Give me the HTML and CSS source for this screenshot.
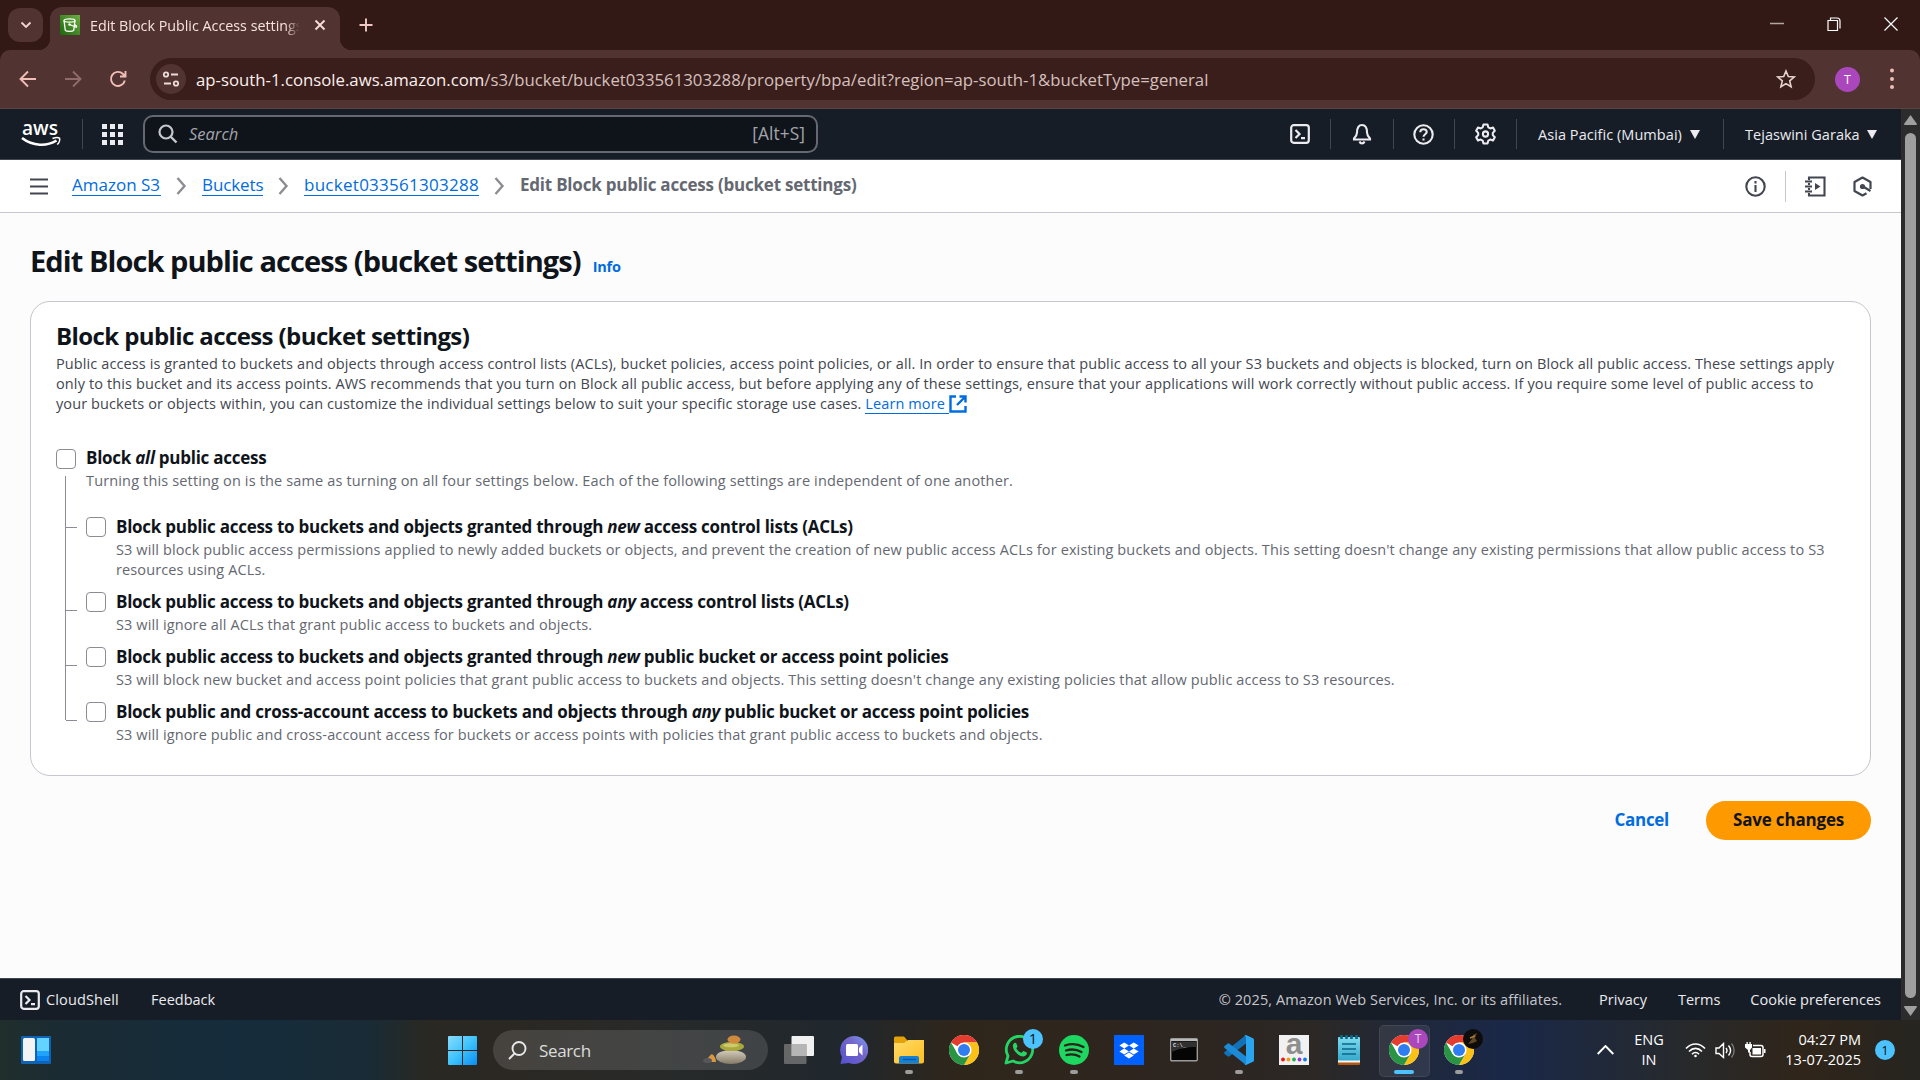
FILE: index.html
```
<!DOCTYPE html>
<html lang="en">
<head>
<meta charset="utf-8">
<title>Edit Block Public Access settings</title>
<link rel="stylesheet" href="styles.css">
</head>
<body>
<svg class="defs" width="0" height="0">
  <defs>
    <linearGradient id="bucketBg" x1="1" y1="0" x2="0" y2="1"><stop offset="0" stop-color="#6cae3e"/><stop offset="1" stop-color="#1b660f"/></linearGradient>
    <linearGradient id="win" x1="0" y1="0" x2="1" y2="1"><stop offset="0" stop-color="#8adcfd"/><stop offset=".5" stop-color="#3fc3fb"/><stop offset="1" stop-color="#0a8cf5"/></linearGradient>
    <linearGradient id="chatBg" x1="1" y1="0" x2="0" y2="1"><stop offset="0" stop-color="#7b9cf5"/><stop offset=".4" stop-color="#7467c8"/><stop offset="1" stop-color="#5450cf"/></linearGradient>
    <linearGradient id="folder" x1="0" y1="0" x2="1" y2="1"><stop offset="0" stop-color="#ffdc6a"/><stop offset="1" stop-color="#ffbd1e"/></linearGradient>
    <linearGradient id="stone" x1="0" y1="0" x2="0" y2="1"><stop offset="0" stop-color="#d6cdbc"/><stop offset="1" stop-color="#857a68"/></linearGradient>
    <linearGradient id="note" x1="0" y1="0" x2="0" y2="1"><stop offset="0" stop-color="#7fdcf0"/><stop offset="1" stop-color="#35a9cc"/></linearGradient>
    <symbol id="chrome" viewBox="0 0 30 30">
      <circle cx="15" cy="15" r="15" fill="#fff"/>
      <path d="M15 15L2 7.500A15 15 0 0 1 28 7.500H15z" fill="#e53c30"/>
      <path d="M15 7.500H28A15 15 0 0 1 15 30L21.500 18.800z" fill="#fbc116"/>
      <path d="M2 7.500A15 15 0 0 0 15 30L21.500 18.800 15 22 8.500 18.800z" fill="#2a9445"/>
      <circle cx="15" cy="15" r="7.600" fill="#fff"/><circle cx="15" cy="15" r="6" fill="#2f7df0"/>
    </symbol>
    <symbol id="shell" viewBox="0 0 20 20"><rect x="1.200" y="1.200" width="17.600" height="17.600" rx="2.500" fill="none" stroke="currentColor" stroke-width="2.200"/><path d="M5.500 6l4 4-4 4M11 14.200h4" fill="none" stroke="currentColor" stroke-width="2.200"/></symbol>
  </defs>
</svg>

<div class="tabstrip">
  <div class="tab-search"><svg width="12" height="8" viewBox="0 0 12 8"><path d="M1.500 1.500L6 6l4.500-4.500" class="ln" stroke="#f0d4d0"/></svg></div>
  <div class="tab">
    <svg width="20" height="20" viewBox="0 0 20 20"><rect width="20" height="20" fill="url(#bucketBg)"/><g fill="none" stroke="#fff" stroke-width="1.300"><ellipse cx="9.500" cy="5.500" rx="5.500" ry="1.600"/><path d="M4 5.500l1.300 9.800c1 1.300 7.400 1.300 8.400 0L15 5.500M9.500 9.500l6 2.500c2 .5 1-1.500-.8-2.500"/></g><circle cx="9.500" cy="9.500" r="1.200" fill="#fff"/></svg>
    <span class="tab-title">Edit Block Public Access settings</span>
    <svg width="12" height="12" viewBox="0 0 12 12"><path d="M1.500 1.500l9 9M10.500 1.500l-9 9" class="ln" stroke="#f6dedb"/></svg>
  </div>
  <svg class="newtab" width="14" height="14" viewBox="0 0 14 14"><path d="M7 .5v13M.5 7h13" class="ln" stroke="#f0c9c4"/></svg>
  <div class="win-controls">
    <svg width="14" height="14" viewBox="0 0 14 14"><path d="M0 6.500h14" stroke="#b4a5a2" stroke-width="1.500"/></svg>
    <svg width="14" height="14" viewBox="0 0 14 14"><path d="M1 3.500h9.500v10H1zM3.500 3V1H10q3 0 3 3v7.500" fill="none" stroke="#fff" stroke-width="1.200"/></svg>
    <svg width="14" height="14" viewBox="0 0 14 14"><path d="M.5.5l13 13M13.500.5l-13 13" stroke="#fff" stroke-width="1.200"/></svg>
  </div>
</div>

<div class="toolbar">
  <div class="nav">
    <svg width="18" height="18" viewBox="0 0 18 18"><path d="M17 9H2M9 1.500L1.500 9 9 16.500" class="ln" stroke="#f0bdb7"/></svg>
    <svg width="18" height="18" viewBox="0 0 18 18"><path d="M1 9h15M9 1.500L16.500 9 9 16.500" class="ln" stroke="#8f6c69"/></svg>
    <svg width="18" height="18" viewBox="0 0 18 18"><path d="M15.800 10.500A7 7 0 1 1 14 4l1.800 2M16.500 1v5.500H11" class="ln" stroke="#f0bdb7"/></svg>
  </div>
  <div class="omnibox">
    <div class="site-info"><svg width="18" height="18" viewBox="0 0 18 18"><g fill="none" stroke="#ecdcd9" stroke-width="1.800"><circle cx="4" cy="4.500" r="2.200"/><path d="M9 4.500h7M2 13.500h7"/><circle cx="14" cy="13.500" r="2.200"/></g></svg></div>
    <span class="url"><span class="host">ap-south-1.console.aws.amazon.com</span>/s3/bucket/bucket033561303288/property/bpa/edit?region=ap-south-1&amp;bucketType=general</span>
    <svg class="star" width="20" height="20" viewBox="0 0 20 20"><path d="M10 2l2.300 5.500 5.900.5-4.500 3.900 1.400 5.800L10 14.600l-5.100 3.100 1.400-5.800L1.800 8l5.900-.5z" fill="none" stroke="#e6d3d0" stroke-width="1.600"/></svg>
  </div>
  <div class="avatar">T</div>
  <svg class="dots" width="4" height="22" viewBox="0 0 4 22" fill="#f0bdb7"><circle cx="2" cy="2.500" r="2"/><circle cx="2" cy="11" r="2"/><circle cx="2" cy="19" r="2"/></svg>
</div>

<div class="viewport">
  <div class="page">
    <header class="aws-header">
      <svg class="logo" width="40" height="30" viewBox="0 0 40 30"><text x="1" y="15.500" class="logo-text" textLength="36" lengthAdjust="spacingAndGlyphs">aws</text><path d="M1 19c11 8.500 25 8.500 34.500 2.500" fill="none" stroke="#fff" stroke-width="2.600"/><path d="M31.500 19.500c3-1 6-1 7-.3.600 1.800-.5 4.800-2.300 6.300" fill="none" stroke="#fff" stroke-width="1.600"/></svg>
      <i class="sep"></i>
      <svg class="apps" width="21" height="21" viewBox="0 0 21 21" fill="#ebebf0"><path d="M0 0h5v5H0zM8 0h5v5H8zM16 0h5v5h-5zM0 8h5v5H0zM8 8h5v5H8zM16 8h5v5h-5zM0 16h5v5H0zM8 16h5v5H8zM16 16h5v5h-5z"/></svg>
      <div class="search">
        <svg width="20" height="20" viewBox="0 0 20 20"><circle cx="8" cy="8" r="6.500" fill="none" stroke="#c6c6cd" stroke-width="2.200"/><path d="M12.500 12.500l6 6" stroke="#c6c6cd" stroke-width="2.400"/></svg>
        <span class="ph">Search</span><span class="hint">[Alt+S]</span>
      </div>
      <div class="tools">
        <div class="tool t1"><svg width="20" height="20"><use href="#shell"/></svg></div>
        <div class="tool t2"><svg width="20" height="22" viewBox="0 0 20 22" fill="none" stroke="currentColor" stroke-width="2.100"><path d="M2 15.500c2-2 3-3 3-6C5 4.500 7 2 10 2s5 2.500 5 7.500c0 3 1 4 3 6v1H2zM7.500 18.500c1 2.500 4 2.500 5 0"/></svg></div>
        <div class="tool t3"><svg width="21" height="21" viewBox="0 0 21 21" fill="none" stroke="currentColor" stroke-width="2.100"><circle cx="10.500" cy="10.500" r="9.200"/><path d="M7.300 8.300c0-4 6.400-4 6.400-.3 0 2.200-3.200 2.300-3.200 4.800M10.500 14.500v2"/></svg></div>
        <div class="tool t4"><svg width="21" height="22" viewBox="0 0 21 22" fill="none" stroke="currentColor" stroke-width="2.100"><path d="M8.500 1.500h4l.8 2.800 2 1.100 2.700-.9 1.800 3.300-2 2.100v2.200l2 2.100-1.800 3.300-2.700-.9-2 1.100-.8 2.800h-4l-.8-2.800-2-1.100-2.700.9-1.800-3.300 2-2.100V9.900l-2-2.100L3 4.500l2.700.9 2-1.100z" stroke-linejoin="round"/><circle cx="10.500" cy="11" r="2.600"/></svg></div>
        <div class="tool menu t5"><span>Asia Pacific (Mumbai)</span><i class="caret"></i></div>
        <div class="tool menu t6"><span>Tejaswini Garaka</span><i class="caret"></i></div>
      </div>
    </header>

    <nav class="crumbs">
      <svg class="burger" width="18" height="17" viewBox="0 0 18 17"><path d="M0 1.500h18M0 8.500h18M0 15.500h18" stroke="#424650" stroke-width="2.200"/></svg>
      <a class="c1">Amazon S3</a><svg class="chev" width="11" height="18" viewBox="0 0 11 18"><path d="M1.500 1l7 8-7 8"/></svg>
      <a class="c2">Buckets</a><svg class="chev" width="11" height="18" viewBox="0 0 11 18"><path d="M1.500 1l7 8-7 8"/></svg>
      <a class="c3">bucket033561303288</a><svg class="chev" width="11" height="18" viewBox="0 0 11 18"><path d="M1.500 1l7 8-7 8"/></svg>
      <b>Edit Block public access (bucket settings)</b>
      <div class="crumb-tools">
        <svg width="21" height="21" viewBox="0 0 21 21" fill="none" stroke="#424650" stroke-width="2.100"><circle cx="10.500" cy="10.500" r="9.200"/><path d="M10.500 9v7M10.500 5v2.500"/></svg>
        <i></i>
        <svg width="21" height="21" viewBox="0 0 21 21" fill="none" stroke="#424650" stroke-width="2.100"><path d="M4 4V1.500h15.500v18H4V17M4 7v2M4 12v2M0 5.500h7M0 10.500h7M0 15.500h7"/><path d="M10 7v7l5.500-3.500z" fill="#424650" stroke="none"/></svg>
        <svg width="19" height="21" viewBox="0 0 19 21" fill="none" stroke="#424650" stroke-width="2.200"><path d="M17.500 13V6l-8-4.500-8 4.500v9l8 4.500 4-2.300M10 10.500l7.500 4.500" stroke-linejoin="round"/><circle cx="9.500" cy="10.500" r="2.600" fill="#424650" stroke="none"/></svg>
      </div>
    </nav>

    <main class="content">
      <div class="title-row"><h1>Edit Block public access (bucket settings)</h1><a>Info</a></div>
      <section class="card">
        <h2>Block public access (bucket settings)</h2>
        <p class="intro">Public access is granted to buckets and objects through access control lists (ACLs), bucket policies, access point policies, or all. In order to ensure that public access to all your S3 buckets and objects is blocked, turn on Block all public access. These settings apply<br><span class="mid">only to this bucket and its access points. AWS recommends that you turn on Block all public access, but before applying any of these settings, ensure that your applications will work correctly without public access. If you require some level of public access to</span><br>your buckets or objects within, you can customize the individual settings below to suit your specific storage use cases. <a class="learn">Learn more&nbsp;</a><svg class="ext" width="18" height="18" viewBox="0 0 18 18" fill="none" stroke="#006ce0" stroke-width="2.400"><path d="M7 1.500H1.500v15h15V11M10.500 1.500h6v6M16 2L8 10"/></svg></p>
        <div class="tree">
          <div class="opt root"><i class="box"></i><div><div class="lbl">Block <em>all</em> public access</div><div class="desc root-desc">Turning this setting on is the same as turning on all four settings below. Each of the following settings are independent of one another.</div></div></div>
          <div class="kids">
            <div class="opt first"><i class="box"></i><div><div class="lbl">Block public access to buckets and objects granted through <em>new</em> access control lists (ACLs)</div><div class="desc">S3 will block public access permissions applied to newly added buckets or objects, and prevent the creation of new public access ACLs for existing buckets and objects. This setting doesn't change any existing permissions that allow public access to S3<br>resources using ACLs.</div></div></div>
            <div class="opt"><i class="box"></i><div><div class="lbl">Block public access to buckets and objects granted through <em>any</em> access control lists (ACLs)</div><div class="desc">S3 will ignore all ACLs that grant public access to buckets and objects.</div></div></div>
            <div class="opt"><i class="box"></i><div><div class="lbl">Block public access to buckets and objects granted through <em>new</em> public bucket or access point policies</div><div class="desc">S3 will block new bucket and access point policies that grant public access to buckets and objects. This setting doesn't change any existing policies that allow public access to S3 resources.</div></div></div>
            <div class="opt"><i class="box"></i><div><div class="lbl">Block public and cross-account access to buckets and objects through <em>any</em> public bucket or access point policies</div><div class="desc">S3 will ignore public and cross-account access for buckets or access points with policies that grant public access to buckets and objects.</div></div></div>
          </div>
        </div>
      </section>
      <div class="actions"><a>Cancel</a><button>Save changes</button></div>
    </main>

    <footer class="aws-footer">
      <svg width="20" height="20"><use href="#shell"/></svg><span class="f1">CloudShell</span><span>Feedback</span>
      <div class="legal"><span class="copy">© 2025, Amazon Web Services, Inc. or its affiliates.</span><span class="f2">Privacy</span><span class="f3">Terms</span><span>Cookie preferences</span></div>
    </footer>
  </div>
  <div class="scrollbar">
    <svg width="13" height="10" viewBox="0 0 13 10"><path d="M6.500 0L13 9q0 1-1 1H1Q0 10 0 9z" fill="#a0a0a0"/></svg>
    <div class="thumb"></div>
    <svg width="13" height="10" viewBox="0 0 13 10"><path d="M6.500 10L13 1q0-1-1-1H1Q0 0 0 1z" fill="#a0a0a0"/></svg>
  </div>
</div>

<div class="taskbar">
  <svg class="widgets" width="30" height="28" viewBox="0 0 30 28"><rect width="30" height="28" rx="1" fill="#0f62b4"/><rect x="2" y="2" width="12" height="23" rx="1.500" fill="#f4f4f6"/><rect x="16" y="2" width="12" height="13" fill="#63d3ff"/><rect x="16" y="15" width="12" height="5" fill="#21a2fb"/><rect x="16" y="20" width="12" height="5" fill="#0c84ef"/></svg>
  <div class="cell start"><svg width="29" height="29" viewBox="0 0 29 29" fill="url(#win)"><path d="M0 1q0-1 1-1h13v14H0zM15 0h13q1 0 1 1v13H15zM0 15h14v14H1q-1 0-1-1zM15 15h14v13q0 1-1 1H15z"/></svg></div>
  <div class="tb-search">
    <svg width="19" height="19" viewBox="0 0 19 19" fill="none" stroke="#e8e8e8" stroke-width="1.900"><circle cx="11" cy="7.500" r="6.500"/><path d="M6.500 12.500L1 18"/></svg>
    <span>Search</span>
    <svg class="stones" width="50" height="30" viewBox="0 0 50 30"><path d="M3 27c2-3 5-7 7-8 3 2 4 5 4 8z" fill="#d9983f"/><ellipse cx="5.500" cy="25.500" rx="4.500" ry="2.500" fill="#55575c"/><ellipse cx="29" cy="22" rx="15" ry="7" fill="url(#stone)"/><ellipse cx="30" cy="11.500" rx="12" ry="4.500" fill="#a8a83c"/><ellipse cx="29" cy="10.300" rx="8" ry="2" fill="#cdc96e"/><ellipse cx="32" cy="4.500" rx="6.500" ry="4" fill="#d08a3e"/></svg>
  </div>
  <div class="cell"><svg width="30" height="28" viewBox="0 0 30 28"><rect x="7.500" y="0" width="22.500" height="20" rx="1" fill="#f0f0f0"/><rect x="0" y="8" width="22.500" height="20" rx="1" fill="#777" opacity=".8"/><rect x="7.500" y="8" width="15" height="12" fill="#b5b5b5"/></svg></div>
  <div class="cell"><svg width="28" height="28" viewBox="0 0 28 28"><path d="M14 0a14 14 0 1 1-5 27l-8.500 1L2 21A14 14 0 0 1 14 0z" fill="url(#chatBg)"/><rect x="6" y="8" width="12" height="12" rx="1.500" fill="#fff"/><path d="M19 12l3.500-3.500v11L19 16z" fill="#fff"/></svg></div>
  <div class="cell run"><svg width="30" height="28" viewBox="0 0 30 28"><path d="M0 2q0-1.500 1.500-1.500H10L13 4v8H0z" fill="#e2a208"/><path d="M0 7h10l4-3h16v21.500q0 2-2 2H2q-2 0-2-2z" fill="url(#folder)"/><path d="M5 27.500V22q0-2 2-2h16q2 0 2 2v5.500z" fill="#1580d4"/><path d="M9 23.500h13" stroke="#0c579f" stroke-width="1.200"/></svg></div>
  <div class="cell"><svg width="30" height="30"><use href="#chrome"/></svg></div>
  <div class="cell run"><svg width="30" height="30" viewBox="0 0 30 30"><path d="M2 28l2-7A13.200 13.200 0 1 1 9 26z" fill="none" stroke="#25d366" stroke-width="2.800" stroke-linejoin="round"/><path d="M9 10c1-3 3-2.500 3.500-1.200l1 2.700c0 1-1.500 1.500-1 2.300 1.200 2 2.700 3.300 4.700 4 1 0 1.500-2 2.500-1.800l3 1.500c1 1-.7 3.800-3.200 4C14 21.500 8 14.500 9 10z" fill="#25d366"/></svg><b class="count">1</b></div>
  <div class="cell run"><svg width="30" height="30" viewBox="0 0 30 30"><circle cx="15" cy="15" r="15" fill="#1ed760"/><path d="M6 10.500c6-2 13-1.500 18.500 1.500M7 15.500c5-1.600 11-1 15.500 1.500M7.500 20c4.500-1.200 9-.8 13 1.500" fill="none" stroke="#2a241b" stroke-width="2.300" stroke-linecap="round"/></svg></div>
  <div class="cell"><svg width="30" height="30" viewBox="0 0 30 30"><rect width="30" height="30" fill="#0061fe"/><path d="M10.200 7.500l4.800 3-4.800 3-4.800-3zM19.800 7.500l4.800 3-4.800 3-4.800-3zM10.200 13.500l4.800 3-4.800 3-4.800-3zM19.800 13.500l4.800 3-4.800 3-4.800-3zM15 17.500l4.800 3-4.800 3-4.800-3z" fill="#fff"/></svg></div>
  <div class="cell"><svg width="28" height="24" viewBox="0 0 28 24"><rect x=".7" y=".7" width="26.600" height="22" rx="1" fill="#050505" stroke="#9b9b9b" stroke-width="1.400"/><rect x="1" y="1" width="26" height="2" fill="#b9b9b9"/><path d="M1.500 3.500h25V9C16 9 8 11 1.500 14z" fill="#303030"/><text x="3" y="9" class="cmd">C:\_</text></svg></div>
  <div class="cell run"><svg width="30" height="30" viewBox="0 0 30 30"><path d="M22 0v8.500L5.500 21.300q-1 .7-2 0L.6 19q-1-1 0-2z" fill="#1272b8"/><path d="M22 30v-8.500L5.500 8.700q-1-.7-2 0L.6 11q-1 1 0 2z" fill="#1d8ad6"/><path d="M22 0l7 3.300q1 .5 1 1.500v20.400q0 1-1 1.500L22 30q-1 0-1.500-1 1.500 0 1.500-1.500v-25Q22 1 20.500 1q.5-1 1.500-1z" fill="#2aa5f0"/></svg></div>
  <div class="cell"><svg width="30" height="30" viewBox="0 0 30 30"><rect width="30" height="30" fill="#f1f1f1"/><text x="15" y="19" class="ama">a</text><circle cx="4" cy="24.500" r="1.900" fill="#f01414"/><circle cx="9.500" cy="24.500" r="1.900" fill="#f59b14"/><circle cx="15" cy="24.500" r="1.900" fill="#1fae54"/><circle cx="20.500" cy="24.500" r="1.900" fill="#9038d8"/><circle cx="26" cy="24.500" r="1.900" fill="#0c7fe0"/></svg></div>
  <div class="cell"><svg width="22" height="30" viewBox="0 0 22 30"><rect y="25" width="22" height="5" rx="1" fill="#b4560e"/><rect y="24" width="22" height="3.500" fill="#f4f4f4"/><rect y="2" width="22" height="23.500" rx="1" fill="url(#note)"/><path d="M4 9h14M4 14h14M4 19h14" stroke="#0b6688" stroke-width="1.700"/><path d="M3.500 0v4M8.500 0v4M13.500 0v4M18.500 0v4" stroke="#0b6688" stroke-width="2.600"/></svg></div>
  <div class="cell active"><svg width="30" height="30"><use href="#chrome"/></svg><b class="pic">T</b></div>
  <div class="cell run"><svg width="30" height="30"><use href="#chrome"/></svg><b class="pic dark"><svg width="20" height="20" viewBox="0 0 20 20"><path d="M5 15l4-5 1-4 4-2-2 5 2 3-4 2z" fill="#5d4526"/><path d="M7 9l5-2" stroke="#b07a35" stroke-width="1.500"/></svg></b></div>
  <div class="tray">
    <svg width="17" height="10" viewBox="0 0 17 10"><path d="M.7 9L8.500 1l7.800 8" class="ln" stroke="#fff"/></svg>
    <div class="lang">ENG<br>IN</div>
    <svg class="wifi" width="21" height="16" viewBox="0 0 21 16" fill="none" stroke="#fff" stroke-width="1.600"><path d="M1 6.500c5.500-6 13.500-6 19 0M4 9.500c4-4.200 9-4.200 13 0M7 12.200c2-2.200 5-2.200 7 0"/><circle cx="10.500" cy="14" r="1.300" fill="#fff" stroke="none"/></svg>
    <svg class="vol" width="21" height="17" viewBox="0 0 21 17" fill="none" stroke="#fff" stroke-width="1.400"><path d="M1 6h3l4.500-4.500v14L4 11.500H1zM11 6c1.200 1.500 1.200 3.500 0 5M13.500 3.500c2.500 3 2.500 7 0 10"/><path d="M16.500 1.500c3.500 4 3.500 10 0 14" stroke="#777"/></svg>
    <svg class="bat" width="21" height="17" viewBox="0 0 21 17"><path d="M8 3.500h8q2 0 2 2v7q0 2-2 2H7q-2 0-2-2V10" fill="none" stroke="#fff" stroke-width="1.500"/><path d="M7.500 6H16v6.500H7.500zM19 7h1.500v4H19zM0 2h1.500V0h1.300v2h1.600V0h1.300v2H7v3.500L5 8v2.500H3V8L0 5.500z" fill="#fff"/></svg>
    <div class="clock">04:27 PM<br>13-07-2025</div>
    <b class="notif">1</b>
  </div>
</div>
</body>
</html>
```
FILE: styles.css
```
* { box-sizing: border-box; }
body { margin: 0; width: 1920px; height: 1080px; overflow: hidden; display: flex; flex-direction: column; font-family: "Open Sans", "Noto Sans", sans-serif; font-size: 14.5px; background: #321916; color: #0f141a; }
svg { display: block; flex: none; }
.defs { position: absolute; }
.ln { fill: none; stroke-width: 1.9; }

/* browser chrome */
.tabstrip { height: 50px; flex: none; display: flex; background: #321916; padding-left: 8px; }
.tab-search { width: 35px; height: 34px; margin-top: 8px; border-radius: 12px; background: #513331; display: flex; align-items: center; justify-content: center; }
.tab { position: relative; width: 290px; height: 43px; margin: 7px 0 0 7px; padding: 0 14px 7px 10px; border-radius: 12px 12px 0 0; background: #513331; display: flex; align-items: center; }
.tab::before, .tab::after { content: ""; position: absolute; bottom: 0; width: 12px; height: 12px; }
.tab::before { left: -12px; background: radial-gradient(circle at 0 0, transparent 12px, #513331 12.5px); }
.tab::after { right: -12px; background: radial-gradient(circle at 100% 0, transparent 12px, #513331 12.5px); }
.tab-title { width: 210px; margin: 1px 14px 0 10px; overflow: hidden; white-space: nowrap; font-size: 14.3px; line-height: 22px; color: #f6e3e0; -webkit-mask-image: linear-gradient(90deg, #000 93%, transparent); mask-image: linear-gradient(90deg, #000 93%, transparent); }
.newtab { margin: 18px 0 0 19px; }
.win-controls { display: flex; gap: 43px; margin: 17px 22px 0 auto; }
.toolbar { height: 59px; flex: none; display: flex; align-items: center; background: #513331; border-bottom: 1px solid #5a4440; border-radius: 10px 10px 0 0; padding: 0 26px 0 19px; }
.nav { display: flex; gap: 27px; width: 131px; }
.omnibox { width: 1665px; height: 42px; border-radius: 21px; background: #3a1e1c; display: flex; align-items: center; padding: 0 19px 0 6px; }
.site-info { width: 30px; height: 30px; border-radius: 50%; background: #513331; display: flex; align-items: center; justify-content: center; }
.url { margin: 1px 0 0 10px; font-size: 16.75px; line-height: 24px; color: #d6c0bd; white-space: nowrap; }
.host { color: #fbefed; }
.star { margin-left: auto; }
.avatar { width: 25px; height: 25px; margin-left: 20px; border-radius: 50%; background: #ab47bc; color: #fff; font-size: 12.5px; line-height: 25px; text-align: center; }
.dots { margin-left: auto; }

.viewport { height: 911px; flex: none; display: flex; }
.page { width: 1901px; display: flex; flex-direction: column; background: #fcfcfd; }

/* console header */
.aws-header { height: 51px; flex: none; display: flex; align-items: center; background: #161d26; border-bottom: 1px solid #424650; color: #ebebf0; padding-left: 21px; }
.logo { overflow: visible; }
.logo-text { font: 600 20px "Open Sans", sans-serif; fill: #fff; }
.sep { width: 1px; height: 30px; background: #424650; margin-left: 21px; }
.apps { margin-left: 19px; }
.search { width: 675px; height: 38px; margin-left: 20px; border: 2px solid #656871; border-radius: 10px; background: #0f141a; display: flex; align-items: center; padding: 0 11px 0 13px; }
.ph { margin: -2px 0 0 11px; font-size: 16.5px; font-style: italic; color: #a4a4ad; }
.hint { margin: -2px 0 0 auto; font-size: 17.3px; letter-spacing: .1px; color: #a4a4ad; }
.tools { display: flex; margin-left: 451px; }
.tool { height: 30px; display: flex; align-items: center; justify-content: center; border-left: 1px solid #424650; }
.t1 { border-left: 0; width: 61px; }
.t2 { width: 63px; padding-right: 1px; }
.t3 { width: 61px; padding-right: 1px; }
.t4 { width: 62px; }
.menu { justify-content: flex-start; padding-left: 21px; white-space: nowrap; letter-spacing: .06px; font-weight: 500; }
.t5 { width: 207px; }
.t5 span { width: 152px; }
.t6 span { width: 122px; letter-spacing: .03px; }
.caret { border: 5px solid transparent; border-top: 9px solid #ebebf0; border-bottom: 0; }

.crumbs { height: 53px; flex: none; display: flex; align-items: center; background: #fff; border-bottom: 1px solid #c6c6cd; padding: 0 29px 0 30px; font-size: 17px; }
.crumbs a { color: #006ce0; line-height: 20px; border-bottom: 1px solid #006ce0; margin-top: -1px; white-space: nowrap; }
.burger { margin-right: 24px; }
.c1 { width: 89px; }
.c2 { width: 61px; letter-spacing: -.1px; }
.c3 { width: 175px; letter-spacing: .27px; }
.chev { margin: 0 15px; fill: none; stroke: #8c8c94; stroke-width: 2.4; }
.crumbs b { font-weight: 700; color: #656871; letter-spacing: -.22px; margin-top: -3px; }
.crumb-tools { display: flex; align-items: center; margin-left: auto; }
.crumb-tools i { width: 1px; height: 31px; background: #c6c6cd; margin: 0 19px; }
.crumb-tools svg + svg { margin-left: 27px; }

/* form */
.content { flex: 1; padding: 0 30px; }
.title-row { display: flex; align-items: baseline; height: 88px; padding-top: 28px; }
h1 { margin: 0; font-size: 29px; line-height: 40px; font-weight: 700; letter-spacing: -.93px; white-space: nowrap; }
.title-row a { margin-left: 12px; color: #006ce0; font-weight: 700; font-size: 14.5px; letter-spacing: -.2px; }
.card { width: 1841px; height: 475px; border: 1px solid #c6c6cd; border-radius: 20px; background: #fff; padding: 18px 25px; white-space: nowrap; }
h2 { margin: 0; font-size: 24px; line-height: 32px; font-weight: 700; letter-spacing: -.6px; }
.intro { margin: 2px 0 0; line-height: 20px; height: 60px; color: #424650; letter-spacing: .105px; }
.mid { letter-spacing: .12px; }
.learn { color: #006ce0; display: inline-block; line-height: 18px; border-bottom: 1px solid #006ce0; }
.ext { display: inline-block; vertical-align: -4px; }
.tree { position: relative; margin-top: 32px; }
.opt { position: relative; display: flex; gap: 10px; }
.box { width: 20px; height: 20px; margin-top: 2px; border: 1px solid #8c8c94; border-radius: 4px; background: #fff; flex: none; }
.root .box { margin-top: 3px; }
.lbl { font-size: 17px; font-weight: 700; line-height: 23px; padding-bottom: 2px; letter-spacing: -.26px; }
.desc { line-height: 20px; color: #656871; letter-spacing: .12px; }
.root-desc { letter-spacing: .15px; }
.kids { display: flex; flex-direction: column; gap: 10px; padding: 24px 0 0 30px; }
.tree::before { content: ""; position: absolute; left: 9px; top: 30px; height: 244px; border-left: 1px solid #8c8c94; }
.kids .opt::before { content: ""; position: absolute; left: -20px; top: 20px; width: 11px; border-top: 1px solid #8c8c94; }
.kids .first::before { top: 12px; }
.actions { display: flex; justify-content: flex-end; align-items: center; margin-top: 25px; font-size: 17px; font-weight: 700; }
.actions a { color: #006ce0; margin-top: -2px; letter-spacing: -.3px; }
.actions button { width: 165px; height: 39px; margin-left: 37px; padding: 0 0 2px; border: 0; border-radius: 20px; background: #ff9900; color: #0f141a; font: inherit; letter-spacing: -.18px; }

.aws-footer { height: 42px; flex: none; display: flex; align-items: center; background: #161d26; border-top: 1px solid #424650; color: #ebebf0; padding: 0 20px; font-weight: 500; white-space: nowrap; }
.f1 { width: 105px; margin-left: 6px; letter-spacing: .12px; }
.legal { display: flex; margin-left: auto; }
.copy { color: #c6c6cd; font-weight: 400; letter-spacing: .1px; margin-right: 37px; }
.f2 { margin-right: 31px; }
.f3 { margin-right: 30px; }

.scrollbar { width: 19px; background: #2c2c2c; display: flex; flex-direction: column; align-items: center; padding: 6px 0 4px; }
.thumb { width: 11px; height: 865px; border-radius: 6px; background: #9f9f9f; margin: 8px 0; }

/* taskbar */
.taskbar { height: 60px; flex: none; display: flex; align-items: center; color: #fff; background: linear-gradient(90deg, #202e2c 0, #1a2b33 60px, #152c3c 230px, #192b35 370px, #2a2822 430px, #2b2823 520px, #282a29 650px, #20272d 840px, #2f261b 960px, #2d2520 1200px, #2b2826 1320px, #1f283c 1420px, #1a2848 1510px, #20293a 1600px, #27292b 1690px, #30251a 1800px, #262520 1920px); }
.widgets { margin-left: 21px; }
.cell { position: relative; width: 55px; height: 60px; flex: none; display: flex; align-items: center; justify-content: center; }
.start { margin: 0 3px 0 384px; }
.tb-search { width: 275px; height: 40px; margin-right: 3px; border-radius: 20px; background: rgba(255, 255, 255, .13); display: flex; align-items: center; padding: 0 16px 0 15px; font-size: 17px; color: #dcdcda; }
.tb-search span { margin-left: 12px; letter-spacing: -.35px; }
.stones { margin-left: auto; }
.run::after, .active::after { content: ""; position: absolute; bottom: 6px; left: 24px; width: 8px; height: 4px; border-radius: 2px; background: #9c9c9c; }
.active::after { left: 18px; width: 20px; background: #4cc2ff; }
.active::before { content: ""; position: absolute; left: 3px; top: 5px; width: 49px; height: 50px; border-radius: 5px; background: rgba(255, 255, 255, .08); border: 1px solid rgba(255, 255, 255, .07); }
.active svg { position: relative; }
.count, .pic { position: absolute; left: 32px; top: 9px; width: 20px; height: 20px; border-radius: 50%; background: #4cc2ff; color: #111; font-weight: 400; font-size: 14px; line-height: 20px; text-align: center; }
.pic { background: #ab47bc; color: #e9d0ee; font-size: 12px; }
.dark { background: #0d0c0b; }
.cmd { font: 700 5.5px "Liberation Mono", monospace; fill: #ddd; }
.ama { font: 700 30px "Liberation Sans", sans-serif; fill: #8e8e8e; text-anchor: middle; }
.tray { display: flex; align-items: center; margin-left: auto; padding-right: 25px; line-height: 20px; }
.lang { width: 40px; margin: 0 16px 0 15px; text-align: center; white-space: nowrap; }
.wifi { margin-right: 9px; }
.vol { margin-right: 9px; }
.clock { width: 95px; text-align: right; white-space: nowrap; }
.notif { width: 20px; height: 20px; margin-left: 14px; border-radius: 50%; background: #4cc2ff; color: #111; font-weight: 400; font-size: 13px; text-align: center; }
```
